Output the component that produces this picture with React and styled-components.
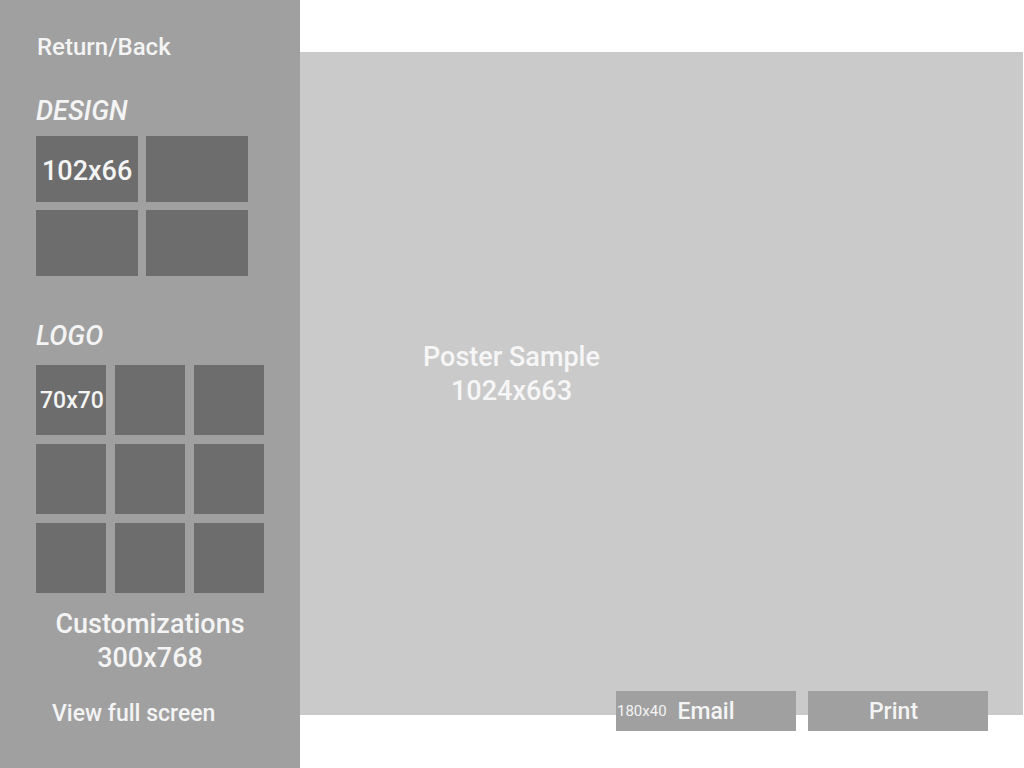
import React from "react";
import styled, { createGlobalStyle } from "styled-components";

const Global = createGlobalStyle`
  html, body {
    margin: 0;
    padding: 0;
    background: #fff;
    font-family: Roboto, "Liberation Sans", sans-serif;
  }
`;

const Page = styled.div`
  display: flex;
  width: 1024px;
  height: 768px;
  overflow: hidden;
`;

const Sidebar = styled.aside`
  width: 300px;
  flex-shrink: 0;
  background: #a0a0a0;
  color: #f4f4f4;
  display: flex;
  flex-direction: column;
  padding: 32px 0 0 36px;
  box-sizing: border-box;
`;

const BackLink = styled.div`
  font-size: 24px;
  font-weight: 500;
  line-height: 30px;
  padding-left: 1px;
`;

const SectionTitle = styled.h2`
  margin: ${(p) => p.$top}px 0 0;
  font-size: 27px;
  font-weight: 500;
  font-style: italic;
  line-height: 30px;
`;

const TileGrid = styled.div`
  display: grid;
  grid-template-columns: repeat(${(p) => p.$cols}, ${(p) => p.$w}px);
  grid-auto-rows: ${(p) => p.$h}px;
  gap: ${(p) => p.$gap}px;
  margin-top: ${(p) => p.$top}px;
`;

const Tile = styled.div`
  background: #6d6d6d;
  display: flex;
  align-items: center;
  box-sizing: border-box;
  padding: ${(p) => p.$drop || 0}px 0 0 ${(p) => p.$pad || 0}px;
  font-size: ${(p) => p.$size}px;
  font-weight: 500;
  white-space: nowrap;
`;

const Caption = styled.div`
  margin: 14px 0 0 -36px;
  text-align: center;
  font-size: 27px;
  font-weight: 500;
  line-height: 34px;
`;

const FullScreen = styled.div`
  margin: 25px 0 0 16px;
  font-size: 23px;
  font-weight: 500;
  line-height: 28px;
`;

const Main = styled.main`
  flex: 1;
  display: flex;
  flex-direction: column;
  padding-top: 52px;
  padding-right: 1px;
`;

const Poster = styled.section`
  height: 663px;
  background: #cacaca;
  color: #f6f6f6;
  display: flex;
  flex-direction: column;
  justify-content: center;
  padding: 0 0 20px 0;
  box-sizing: border-box;
`;

const PosterLabel = styled.div`
  width: 423px;
  text-align: center;
  font-size: 27px;
  font-weight: 500;
  line-height: 34px;
`;

const Actions = styled.div`
  display: flex;
  justify-content: flex-end;
  gap: 12px;
  margin-top: -24px;
  padding-right: 35px;
`;

const ActionButton = styled.button`
  position: relative;
  width: 180px;
  height: 40px;
  border: none;
  background: #a0a0a0;
  color: #f4f4f4;
  font-family: inherit;
  font-size: 23px;
  font-weight: 500;
  display: flex;
  align-items: center;
  justify-content: center;
  padding: 0 ${(p) => p.$inset || 0}px 0 0;
  cursor: pointer;
`;

const SizeNote = styled.span`
  position: absolute;
  left: 1px;
  top: 12px;
  font-size: 15px;
  font-weight: 400;
  line-height: 16px;
`;

export default function App() {
  return (
    <>
      <Global />
      <Page>
        <Sidebar>
          <BackLink>Return/Back</BackLink>
          <SectionTitle $top={34}>DESIGN</SectionTitle>
          <TileGrid $cols={2} $w={102} $h={66} $gap={8} $top={10}>
            <Tile $pad={6} $drop={3} $size={27}>102x66</Tile>
            <Tile />
            <Tile />
            <Tile />
          </TileGrid>
          <SectionTitle $top={45}>LOGO</SectionTitle>
          <TileGrid $cols={3} $w={70} $h={70} $gap={9} $top={14}>
            <Tile $pad={4} $drop={1} $size={23}>70x70</Tile>
            <Tile />
            <Tile />
            <Tile />
            <Tile />
            <Tile />
            <Tile />
            <Tile />
            <Tile />
          </TileGrid>
          <Caption>
            Customizations
            <br />
            300x768
          </Caption>
          <FullScreen>View full screen</FullScreen>
        </Sidebar>
        <Main>
          <Poster>
            <PosterLabel>
              Poster Sample
              <br />
              1024x663
            </PosterLabel>
          </Poster>
          <Actions>
            <ActionButton>
              <SizeNote>180x40</SizeNote>
              Email
            </ActionButton>
            <ActionButton $inset={9}>Print</ActionButton>
          </Actions>
        </Main>
      </Page>
    </>
  );
}
